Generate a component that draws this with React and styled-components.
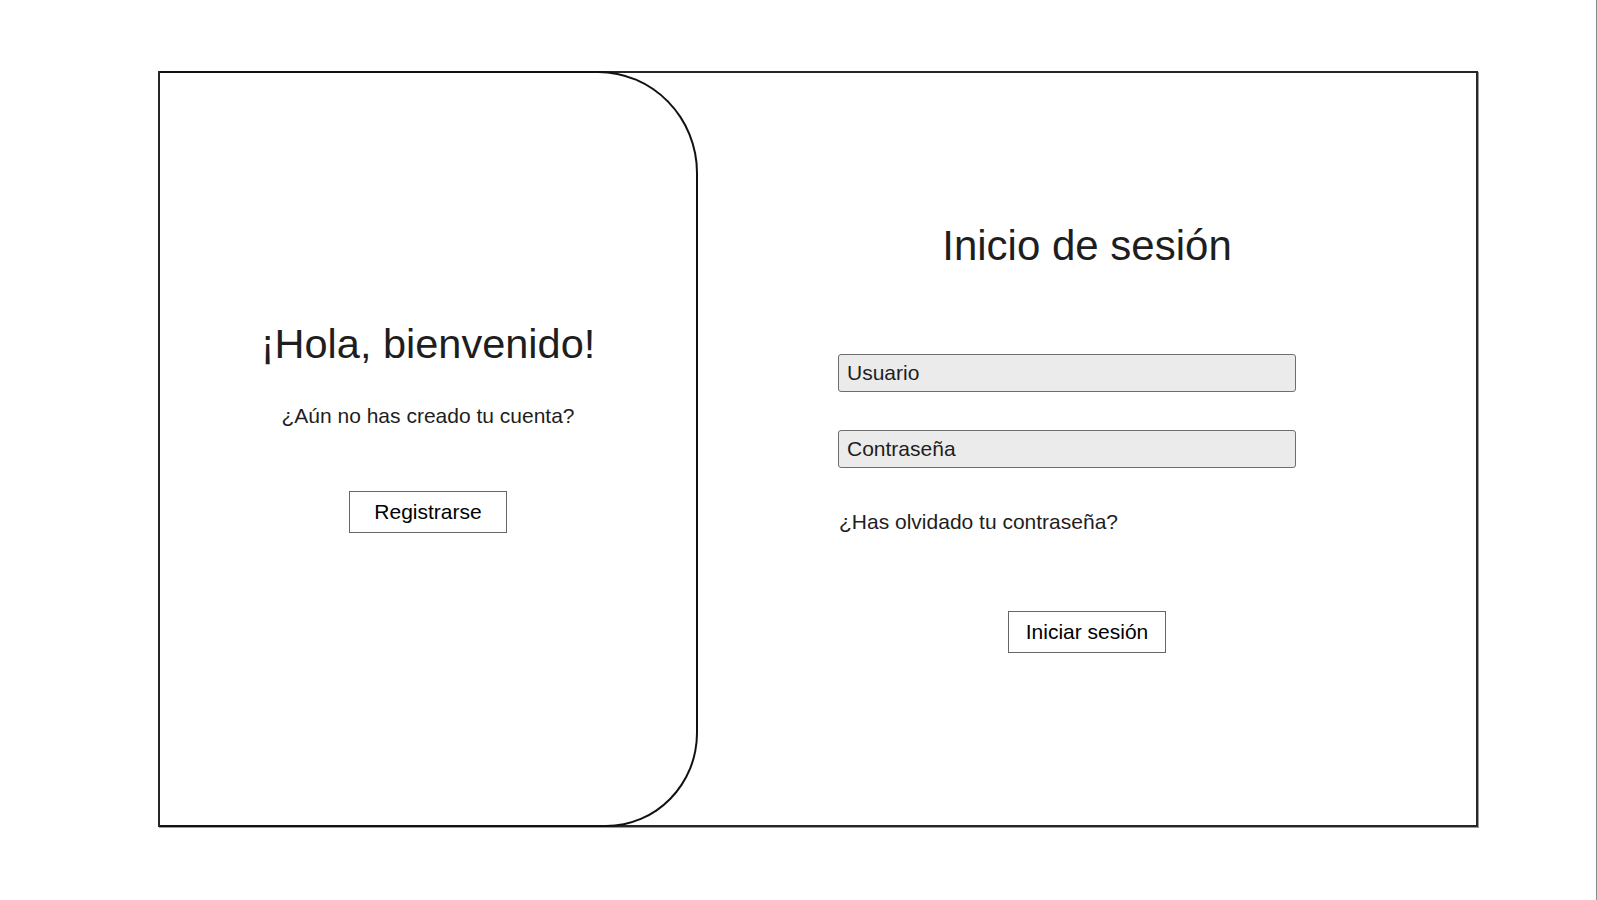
import React from "react";
import styled, { createGlobalStyle } from "styled-components";

const Global = createGlobalStyle`
  html, body { margin: 0; padding: 0; background: #ffffff; }
  body { font-family: "Liberation Sans", Arial, sans-serif; color: #1e1e1e; }
  * { box-sizing: border-box; }
`;

const Page = styled.div`
  width: 1597px;
  min-height: 900px;
  border-right: 1px solid #8c8c8c;
  padding: 71px 0 0 158px;
`;

const Card = styled.div`
  width: 1320px;
  height: 756px;
  border: 2px solid #262626;
  box-shadow: 1px 1px 0 #9a9a9a;
  display: flex;
`;

const WelcomePanel = styled.section`
  width: 538px;
  margin: -2px 0;
  border: 2px solid #111;
  border-left: none;
  border-top-right-radius: 100px 102px;
  border-bottom-right-radius: 92px 94px;
  display: flex;
  flex-direction: column;
  align-items: center;
  padding-top: 247px;
`;

const LoginPanel = styled.section`
  flex: 1;
  display: flex;
  flex-direction: column;
  padding-top: 149px;
`;

const Title = styled.h1`
  margin: 0;
  font-weight: 400;
  font-size: ${(p) => p.$size}px;
  line-height: 1.15;
  color: #1e1e1e;
  text-align: center;
  align-self: center;
`;

const Text = styled.p`
  margin: ${(p) => p.$top}px 0 0 ${(p) => p.$left || 0}px;
  font-size: 21px;
  line-height: 24px;
  color: #1e1e1e;
  align-self: ${(p) => (p.$left ? "flex-start" : "center")};
`;

const OutlineButton = styled.button`
  margin-top: ${(p) => p.$top}px;
  width: 158px;
  height: 42px;
  border: 1.5px solid #666;
  background: #fff;
  font-family: "Liberation Sans", Arial, sans-serif;
  font-size: 21px;
  color: #000;
  display: flex;
  align-items: center;
  justify-content: center;
  align-self: center;
  padding: 0;
  cursor: pointer;
`;

const Field = styled.input`
  margin: ${(p) => p.$top}px 0 0 140px;
  width: 458px;
  height: 38px;
  border: 1.5px solid #6e6e6e;
  border-radius: 3px;
  background: #ebebeb;
  padding: 0 0 0 8px;
  font-family: "Liberation Sans", Arial, sans-serif;
  font-size: 21px;
  color: #1e1e1e;
  outline: none;
  &::placeholder { color: #1e1e1e; opacity: 1; }
`;

export default function App() {
  return (
    <>
      <Global />
      <Page>
        <Card>
          <WelcomePanel>
            <Title $size={41.5}>¡Hola, bienvenido!</Title>
            <Text $top={36}>¿Aún no has creado tu cuenta?</Text>
            <OutlineButton $top={63}>Registrarse</OutlineButton>
          </WelcomePanel>
          <LoginPanel>
            <Title $size={42}>Inicio de sesión</Title>
            <Field $top={84} placeholder="Usuario" />
            <Field $top={38} type="password" placeholder="Contraseña" />
            <Text $top={42} $left={141}>¿Has olvidado tu contraseña?</Text>
            <OutlineButton $top={77}>Iniciar sesión</OutlineButton>
          </LoginPanel>
        </Card>
      </Page>
    </>
  );
}
